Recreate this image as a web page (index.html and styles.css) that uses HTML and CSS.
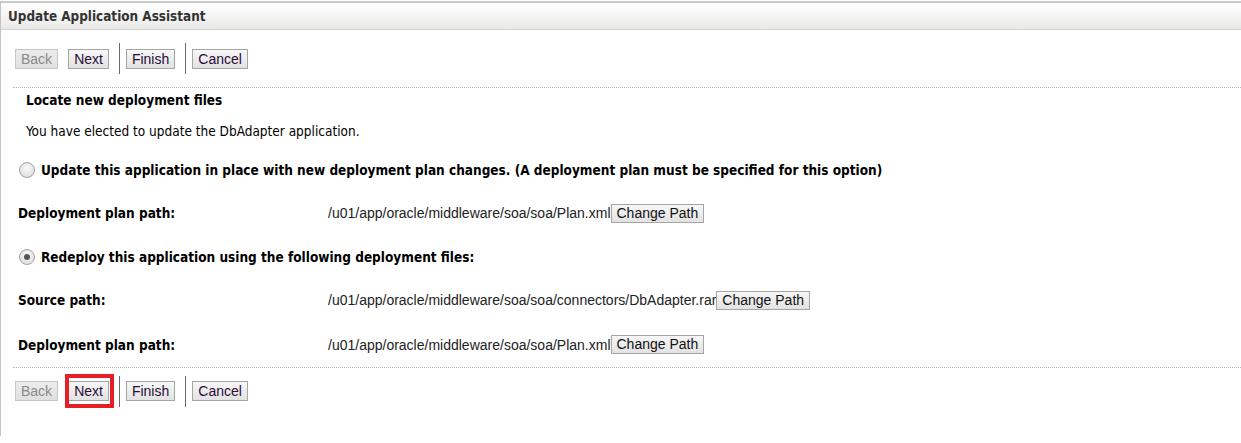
FILE: index.html
```html
<!DOCTYPE html>
<html>
<head>
<meta charset="utf-8">
<title>Update Application Assistant</title>
<link rel="stylesheet" href="styles.css">
</head>
<body>
<div class="panel">
  <div class="header">Update Application Assistant</div>
  <div class="body">
    <div class="toolbar top">
      <button class="btn disabled">Back</button>
      <button class="btn">Next</button>
      <span class="sep"></span>
      <button class="btn">Finish</button>
      <span class="sep"></span>
      <button class="btn">Cancel</button>
    </div>
    <div class="dotted"></div>
    <div class="content">
      <h2 class="section-title">Locate new deployment files</h2>
      <p class="intro">You have elected to update the DbAdapter application.</p>
      <label class="radio-row first">
        <span class="radio"></span>
        <span class="radio-label">Update this application in place with new deployment plan changes. (A deployment plan must be specified for this option)</span>
      </label>
      <div class="field-row r1">
        <span class="field-label">Deployment plan path:</span>
        <span class="field-value">/u01/app/oracle/middleware/soa/soa/Plan.xml</span><button class="btn small">Change Path</button>
      </div>
      <label class="radio-row second">
        <span class="radio checked"></span>
        <span class="radio-label">Redeploy this application using the following deployment files:</span>
      </label>
      <div class="field-row r2">
        <span class="field-label">Source path:</span>
        <span class="field-value">/u01/app/oracle/middleware/soa/soa/connectors/DbAdapter.rar</span><button class="btn small">Change Path</button>
      </div>
      <div class="field-row r3">
        <span class="field-label">Deployment plan path:</span>
        <span class="field-value">/u01/app/oracle/middleware/soa/soa/Plan.xml</span><button class="btn small">Change Path</button>
      </div>
    </div>
    <div class="dotted"></div>
    <div class="toolbar bottom">
      <button class="btn disabled">Back</button>
      <span class="highlight"><button class="btn">Next</button></span>
      <span class="sep"></span>
      <button class="btn">Finish</button>
      <span class="sep"></span>
      <button class="btn">Cancel</button>
    </div>
  </div>
</div>
</body>
</html>
```
FILE: styles.css
```css
html, body {
  margin: 0;
  padding: 0;
  background: #ffffff;
}
body {
  font-family: "DejaVu Sans Condensed", "DejaVu Sans", sans-serif;
  color: #000;
  overflow: hidden;
}
.panel {
  margin-top: 1px;
  border-top: 2px solid #c9c9c9;
  border-left: 1px solid #c4c4c4;
  height: 433px;
  box-shadow: 0 3px 2px #9a9a9a;
  background: #fff;
}
.header {
  height: 27px;
  box-sizing: border-box;
  padding: 5px 0 0 7px;
  border-top: 1px solid #ffffff;
  border-bottom: 1px solid #d6d6d6;
  background: linear-gradient(#ffffff, #e9e9e8);
  font-weight: bold;
  font-size: 13.4px;
  color: #333333;
}
.body {
  padding-left: 11px;
}
.toolbar {
  display: flex;
  align-items: center;
}
.toolbar.top {
  height: 57px;
}
.toolbar.bottom {
  height: 46px;
}
.btn {
  font-family: "Liberation Sans", Arial, sans-serif;
  font-size: 14px;
  height: 20px;
  padding: 0 5px;
  margin: 0;
  border: 1px solid #a5a5a5;
  border-radius: 0;
  background: linear-gradient(#f7f7f7, #e2e2e2);
  color: #2a0d3a;
  line-height: 18px;
}
.btn.disabled {
  color: #8a8a8a;
  border-color: #c6c6c6;
  background: linear-gradient(#ececec, #e0e0e0);
}
.toolbar .btn + .btn,
.toolbar .btn + .highlight {
  margin-left: 10px;
}
.toolbar .disabled {
  margin-left: 3px;
}
.sep {
  width: 1px;
  height: 31px;
  background: #6a6a6a;
  margin: 0 6px 0 10px;
}
.highlight {
  position: relative;
  display: flex;
}
.highlight::after {
  content: "";
  position: absolute;
  left: -3px;
  right: -5px;
  top: -7px;
  bottom: -7px;
  border: 4px solid #e61f26;
  pointer-events: none;
}
.dotted {
  border-top: 1px dotted #b9b9b9;
  margin-left: 1px;
}
.section-title {
  margin: 0;
  padding-left: 14px;
  height: 24px;
  display: flex;
  align-items: center;
  font-size: 13.5px;
  font-weight: bold;
}
.intro {
  margin: 0;
  padding-left: 14px;
  height: 38px;
  display: flex;
  align-items: center;
  font-size: 13.5px;
}
.radio-row {
  display: flex;
  align-items: center;
  font-size: 13.5px;
  font-weight: bold;
}
.radio-row.first {
  height: 40px;
}
.radio-row.second {
  height: 42px;
}
.radio {
  width: 16px;
  height: 16px;
  border-radius: 50%;
  border: 1px solid #a3a3a3;
  background: radial-gradient(circle at 50% 40%, #fbfbfb, #d6d6d6);
  margin: 0 6px 0 7px;
  box-sizing: border-box;
  position: relative;
  flex: none;
}
.radio.checked::after {
  content: "";
  position: absolute;
  left: 4px;
  top: 4px;
  width: 6px;
  height: 6px;
  border-radius: 50%;
  background: #555555;
}
.field-row {
  display: flex;
  align-items: center;
  padding-left: 6px;
}
.field-row.r1 {
  height: 46px;
}
.field-row.r2 {
  height: 44px;
}
.field-row.r3 {
  height: 45px;
}
.field-label {
  width: 310px;
  font-weight: bold;
  font-size: 13.5px;
  flex: none;
}
.field-value {
  font-family: "Liberation Sans", Arial, sans-serif;
  font-size: 14px;
  color: #222;
}
.btn.small {
  height: 19px;
  line-height: 17px;
  padding: 0 5px;
  color: #111;
}
```
